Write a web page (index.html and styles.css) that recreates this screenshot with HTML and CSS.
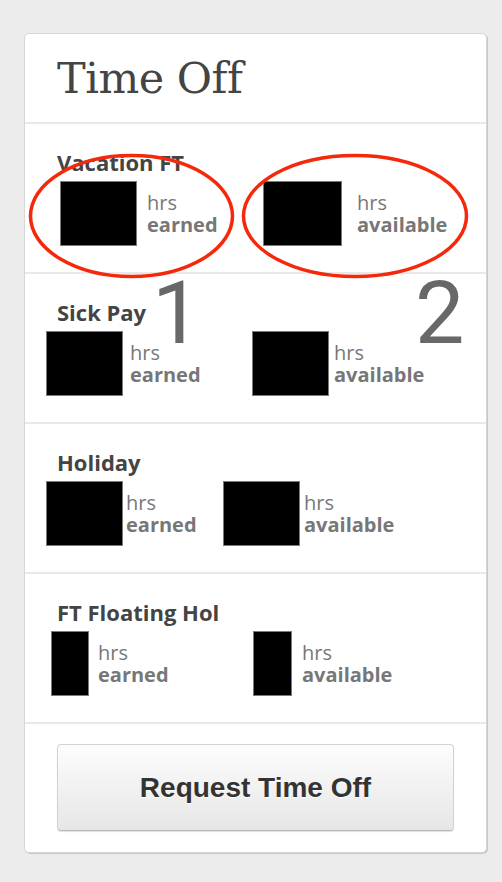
FILE: index.html
```html
<!DOCTYPE html>
<html lang="en">
<head>
<meta charset="utf-8">
<title>Time Off</title>
<link rel="stylesheet" href="styles.css">
</head>
<body>
<div class="page">
  <div class="card">
    <div class="card-header">
      <h1 class="card-title">Time Off</h1>
    </div>

    <div class="section">
      <div class="section-title">Vacation FT</div>
      <div class="stats">
        <div class="stat stat-earned r1-e">
          <div class="redact w77"></div>
          <div class="label g10"><span class="unit">hrs</span><span class="kind">earned</span></div>
        </div>
        <div class="stat">
          <div class="redact w79"></div>
          <div class="label g15"><span class="unit">hrs</span><span class="kind">available</span></div>
        </div>
      </div>
    </div>

    <div class="section">
      <div class="section-title">Sick Pay</div>
      <div class="stats">
        <div class="stat stat-earned r2-e">
          <div class="redact w77"></div>
          <div class="label g7"><span class="unit">hrs</span><span class="kind">earned</span></div>
        </div>
        <div class="stat">
          <div class="redact w77"></div>
          <div class="label g5"><span class="unit">hrs</span><span class="kind">available</span></div>
        </div>
      </div>
    </div>

    <div class="section">
      <div class="section-title">Holiday</div>
      <div class="stats">
        <div class="stat stat-earned r3-e">
          <div class="redact w77"></div>
          <div class="label g3"><span class="unit">hrs</span><span class="kind">earned</span></div>
        </div>
        <div class="stat">
          <div class="redact w77"></div>
          <div class="label g4"><span class="unit">hrs</span><span class="kind">available</span></div>
        </div>
      </div>
    </div>

    <div class="section">
      <div class="section-title">FT Floating Hol</div>
      <div class="stats">
        <div class="stat stat-earned r4-e">
          <div class="redact w38"></div>
          <div class="label g9"><span class="unit">hrs</span><span class="kind">earned</span></div>
        </div>
        <div class="stat">
          <div class="redact w39"></div>
          <div class="label g10"><span class="unit">hrs</span><span class="kind">available</span></div>
        </div>
      </div>
    </div>

    <div class="section section-action">
      <button class="btn" type="button">Request Time Off</button>
    </div>
  </div>

  <svg class="annotations" width="502" height="882" viewBox="0 0 502 882" aria-hidden="true">
    <ellipse cx="131.5" cy="216" rx="101" ry="60.5" fill="none" stroke="#f4290c" stroke-width="3.5"/>
    <ellipse cx="355" cy="216" rx="111.5" ry="60.5" fill="none" stroke="#f4290c" stroke-width="3.5"/>
    <text class="mark" x="152" y="343">1</text>
    <text class="mark" x="415" y="343">2</text>
  </svg>
</div>
</body>
</html>
```

FILE: styles.css
```css
* { box-sizing: border-box; }

html, body {
  margin: 0;
  padding: 0;
  background: #ececec;
}

.page {
  position: relative;
  width: 502px;
  height: 882px;
  overflow: hidden;
  padding: 33px 0 0 24px;
}

.card {
  width: 463px;
  background: #fff;
  border: 1px solid #d6d6d6;
  border-radius: 5px;
  box-shadow: 1px 1px 0 #c8c8c8;
}

.card-header {
  height: 88px;
  padding-left: 32px;
}

.card-title {
  margin: 0;
  font-family: "DejaVu Serif", "Liberation Serif", serif;
  font-weight: normal;
  font-size: 43px;
  line-height: 88px;
  color: #444;
  letter-spacing: -0.5px;
}

.section {
  border-top: 2px solid #e9e9e9;
  height: 150px;
  padding: 25px 0 0 0;
}

.section-title {
  padding-left: 32px;
  font-family: "Open Sans", "Lato", sans-serif;
  font-weight: 700;
  font-size: 22px;
  line-height: 26px;
  color: #444;
  margin-bottom: 6px;
}

.stats {
  display: flex;
  align-items: center;
}

.stat {
  display: flex;
  align-items: center;
}

.r1-e { margin-left: 35px; width: 203px; }
.r2-e { margin-left: 21px; width: 206px; }
.r3-e { margin-left: 21px; width: 177px; }
.r4-e { margin-left: 26px; width: 202px; }

.redact {
  height: 65px;
  background: #000;
  border: 1px solid #7a7a7a;
  flex: none;
}
.w77 { width: 77px; }
.w79 { width: 79px; }
.w38 { width: 38px; }
.w39 { width: 39px; }

.label {
  display: flex;
  flex-direction: column;
  font-family: "Open Sans", "Lato", sans-serif;
  font-size: 20px;
  line-height: 22px;
  color: #777;
}
.label .kind { font-weight: 700; }

.g3 { margin-left: 3px; }
.g4 { margin-left: 4px; }
.g5 { margin-left: 5px; }
.g7 { margin-left: 7px; }
.g9 { margin-left: 9px; }
.g10 { margin-left: 10px; }
.g15 { margin-left: 15px; }

.section-action {
  height: auto;
  padding: 20px 32px 21px;
}

.btn {
  display: block;
  width: 100%;
  height: 87px;
  border: 1px solid #d2d2d2;
  border-bottom-color: #b9b9b9;
  border-radius: 4px;
  background: linear-gradient(#fdfdfd, #e6e6e6);
  box-shadow: 0 1px 1px rgba(0,0,0,0.12);
  font-family: "Liberation Sans", Arial, sans-serif;
  font-weight: 700;
  font-size: 28px;
  color: #333;
  text-shadow: 0 1px 0 #fff;
  padding: 0;
}

.annotations {
  position: absolute;
  left: 0;
  top: 0;
  pointer-events: none;
}

.mark {
  font-family: "Roboto", "Open Sans", sans-serif;
  font-weight: 400;
  font-size: 88px;
  fill: #686868;
}
```
